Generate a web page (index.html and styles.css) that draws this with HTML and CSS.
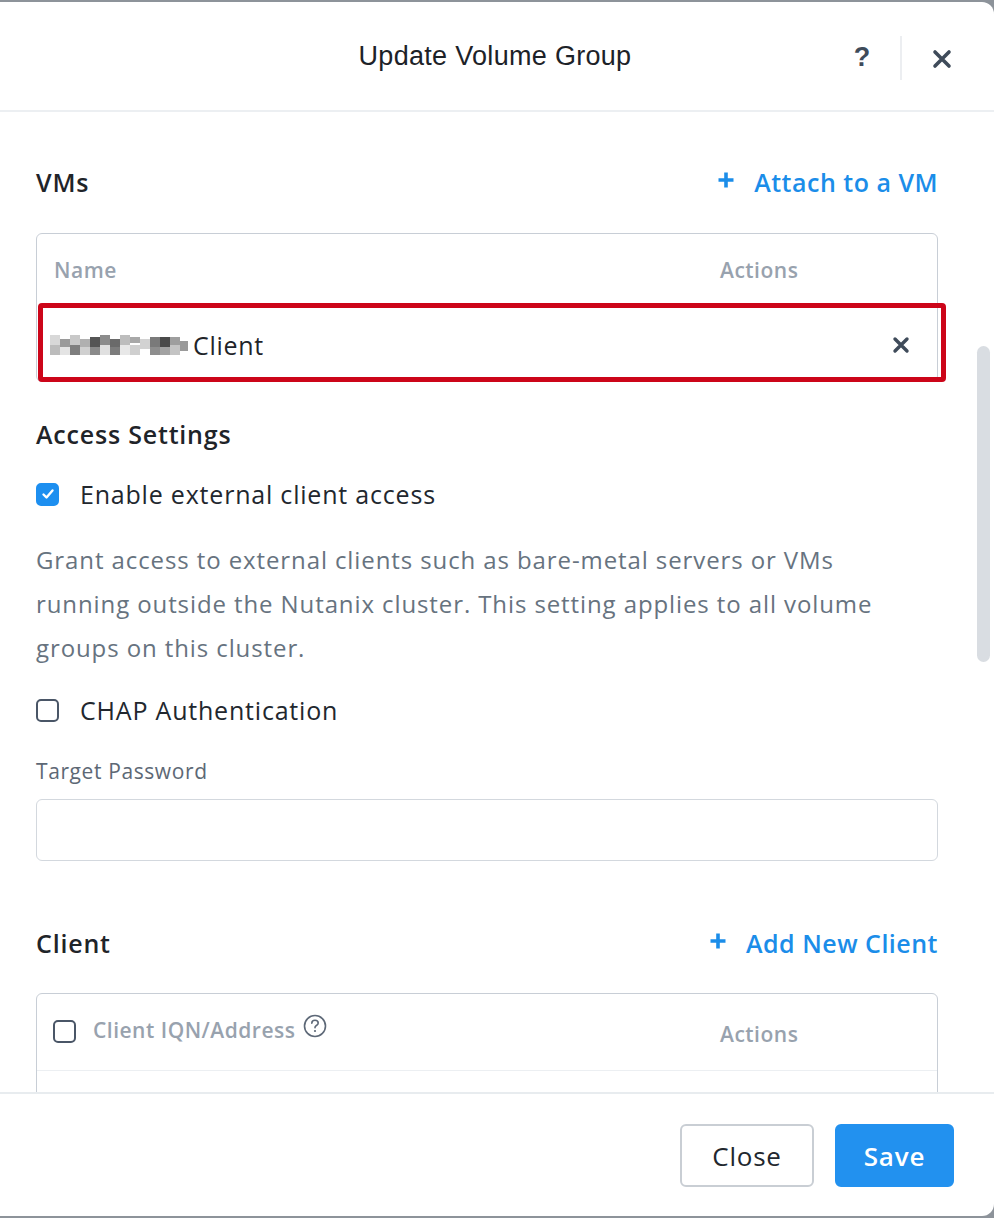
FILE: index.html
```html
<!DOCTYPE html>
<html lang="en">
<head>
    <meta charset="UTF-8">
    <meta name="viewport" content="width=device-width, initial-scale=1.0">
    <title>Update Volume Group</title>
    <link rel="stylesheet" href="styles.css">
</head>
<body>
    <div class="modal">
        <div class="modal-header">
            <h1>Update Volume Group</h1>
            <div class="header-tools">
                <span class="help">?</span>
                <span class="divider"></span>
                <svg class="close-x" width="20" height="20" viewBox="0 0 20 20">
                    <path d="M3 3 L17 17 M17 3 L3 17" stroke="#3f4b5a" stroke-width="3.6" stroke-linecap="round"/>
                </svg>
            </div>
        </div>

        <div class="modal-body">
            <div class="section-head">
                <h2>VMs</h2>
                <a class="add-link" href="#">
                    <svg class="plus" width="18" height="18" viewBox="0 0 18 18">
                        <path d="M9 1.5 V16.5 M1.5 9 H16.5" stroke="#1b8de9" stroke-width="3.6"/>
                    </svg>Attach to a VM
                </a>
            </div>
            <div class="table">
                <div class="table-head">
                    <span class="col-name">Name</span>
                    <span class="col-actions">Actions</span>
                </div>
                <div class="table-row highlighted">
                    <span class="col-name vm-name">
                        <svg class="mosaic" width="142" height="24" viewBox="0 0 142 24">
                            <rect x="0" y="2" width="10" height="10" fill="#d8d8d8"/>
                            <rect x="10" y="6" width="10" height="8" fill="#9a9a9a"/>
                            <rect x="20" y="2" width="10" height="10" fill="#c8c8c8"/>
                            <rect x="30" y="6" width="10" height="8" fill="#b0b0b0"/>
                            <rect x="40" y="4" width="10" height="10" fill="#555"/>
                            <rect x="50" y="2" width="10" height="10" fill="#8c8c8c"/>
                            <rect x="60" y="6" width="10" height="8" fill="#6a6a6a"/>
                            <rect x="70" y="2" width="10" height="10" fill="#bdbdbd"/>
                            <rect x="80" y="4" width="10" height="6" fill="#a8a8a8"/>
                            <rect x="90" y="6" width="10" height="10" fill="#d2d2d2"/>
                            <rect x="100" y="4" width="10" height="10" fill="#7a7a7a"/>
                            <rect x="110" y="4" width="10" height="10" fill="#4a4a4a"/>
                            <rect x="120" y="4" width="10" height="10" fill="#9e9e9e"/>
                            <rect x="0" y="12" width="10" height="10" fill="#bcbcbc"/>
                            <rect x="10" y="14" width="10" height="8" fill="#e4e4e4"/>
                            <rect x="20" y="12" width="10" height="10" fill="#7e7e7e"/>
                            <rect x="30" y="14" width="10" height="8" fill="#d0d0d0"/>
                            <rect x="40" y="14" width="10" height="8" fill="#8a8a8a"/>
                            <rect x="50" y="12" width="10" height="10" fill="#e0e0e0"/>
                            <rect x="60" y="14" width="10" height="8" fill="#7c7c7c"/>
                            <rect x="70" y="12" width="10" height="10" fill="#e8e8e8"/>
                            <rect x="80" y="12" width="10" height="10" fill="#cfcfcf"/>
                            <rect x="100" y="14" width="10" height="8" fill="#8e8e8e"/>
                            <rect x="110" y="14" width="10" height="8" fill="#a2a2a2"/>
                            <rect x="120" y="12" width="10" height="10" fill="#c4c4c4"/>
                            <rect x="130" y="8" width="8" height="10" fill="#9a9a9a"/>
                        </svg>Client
                    </span>
                    <span class="col-actions row-remove">
                        <svg width="18" height="18" viewBox="0 0 18 18">
                            <path d="M3 3 L15 15 M15 3 L3 15" stroke="#3f4b5a" stroke-width="3.4" stroke-linecap="round"/>
                        </svg>
                    </span>
                    <div class="annotation"></div>
                </div>
            </div>

            <h2 class="access-title">Access Settings</h2>
            <label class="check-row">
                <span class="checkbox checked">
                    <svg width="14" height="14" viewBox="0 0 14 14">
                        <path d="M2.5 7.5 L5.5 10.5 L11.5 3.5" stroke="#fff" stroke-width="2.4" fill="none" stroke-linecap="round" stroke-linejoin="round"/>
                    </svg>
                </span>
                Enable external client access
            </label>
            <p class="description">Grant access to external clients such as bare-metal servers or VMs running outside the Nutanix cluster. This setting applies to all volume groups on this cluster.</p>
            <label class="check-row chap">
                <span class="checkbox"></span>
                CHAP Authentication
            </label>

            <div class="field">
                <div class="field-label">Target Password</div>
                <div class="input"></div>
            </div>

            <div class="section-head client-head">
                <h2>Client</h2>
                <a class="add-link" href="#">
                    <svg class="plus" width="18" height="18" viewBox="0 0 18 18">
                        <path d="M9 1.5 V16.5 M1.5 9 H16.5" stroke="#1b8de9" stroke-width="3.6"/>
                    </svg>Add New Client
                </a>
            </div>
            <div class="table client-table">
                <div class="table-head">
                    <span class="col-name">
                        <span class="checkbox small"></span>
                        Client IQN/Address
                        <svg class="info" width="24" height="24" viewBox="0 0 24 24">
                            <circle cx="12" cy="12" r="10.5" stroke="#5d6877" stroke-width="1.6" fill="none"/>
                            <path d="M8.8 9.2 C8.8 7.3 10.2 6.3 12 6.3 C13.8 6.3 15.2 7.4 15.2 9 C15.2 10.6 13.9 11.1 12.9 11.8 C12.2 12.3 12 12.8 12 13.8" stroke="#5d6877" stroke-width="1.6" fill="none" stroke-linecap="round"/>
                            <circle cx="12" cy="17" r="1.1" fill="#5d6877"/>
                        </svg>
                    </span>
                    <span class="col-actions">Actions</span>
                </div>
                <div class="table-row empty"></div>
            </div>

            <div class="scroll-thumb"></div>
        </div>

        <div class="modal-footer">
            <button class="btn">Close</button>
            <button class="btn primary">Save</button>
        </div>
    </div>
</body>
</html>
```

FILE: styles.css
```css
html, body {
    margin: 0;
    height: 100%;
}
body {
    background-color: #8d939a;
    font-family: "Open Sans", "Liberation Sans", sans-serif;
    color: #22272e;
    overflow: hidden;
}
.modal {
    box-sizing: border-box;
    margin-top: 2px;
    height: 1214px;
    background: white;
    border-radius: 0 12px 12px 0;
    display: flex;
    flex-direction: column;
    overflow: hidden;
}

/* header */
.modal-header {
    height: 108px;
    flex-shrink: 0;
    border-bottom: 2px solid #eceff2;
    display: flex;
    align-items: center;
    justify-content: center;
    position: relative;
}
.modal-header h1 {
    margin: 0;
    font-family: "Liberation Sans", Arial, sans-serif;
    font-weight: normal;
    font-size: 27px;
    color: #1d2228;
    letter-spacing: 0.3px;
    margin-left: -4px;
}
.header-tools {
    position: absolute;
    right: 42px;
    top: 34px;
    display: flex;
    align-items: center;
    height: 44px;
}
.help {
    font-family: "Liberation Sans", Arial, sans-serif;
    font-weight: bold;
    font-size: 27px;
    color: #3f4b5a;
    width: 20px;
    text-align: center;
    margin-top: -2px;
}
.divider {
    width: 2px;
    height: 44px;
    background: #eceef1;
    margin: 0 30px 0 28px;
}
.close-x {
    margin-top: 2px;
}

/* body */
.modal-body {
    flex: 1;
    position: relative;
    padding: 48px 56px 0 36px;
    overflow: hidden;
}
.section-head {
    display: flex;
    justify-content: space-between;
    align-items: center;
    height: 44px;
}
h2 {
    margin: 0;
    font-size: 25px;
    font-weight: 600;
    letter-spacing: 0.8px;
    color: #1f2429;
}
.add-link {
    color: #1b8de9;
    font-size: 25px;
    font-weight: 600;
    letter-spacing: 0.5px;
    text-decoration: none;
    display: flex;
    align-items: center;
}
.plus {
    margin-right: 19px;
    margin-top: -4px;
}

.table {
    margin-top: 29px;
    border: 1px solid #c8ced6;
    border-radius: 6px;
}
.table-head {
    height: 71px;
    display: flex;
    align-items: center;
    color: #98a2ae;
    font-size: 21px;
    font-weight: 600;
    letter-spacing: 0.5px;
}
.col-name {
    flex: 1;
    padding-left: 17px;
    display: flex;
    align-items: center;
}
.col-actions {
    width: 217px;
}
.table-row {
    height: 76px;
    display: flex;
    align-items: center;
    position: relative;
    font-size: 25px;
    letter-spacing: 0.7px;
}
.vm-name {
    padding-left: 13px;
    color: #1f2429;
    margin-top: 3px;
}
.mosaic {
    margin-right: 1px;
}
.row-remove {
    display: flex;
    justify-content: flex-end;
    padding-right: 27px;
    box-sizing: border-box;
    margin-top: 4px;
}
.annotation {
    position: absolute;
    top: -2px;
    left: 1px;
    right: -9px;
    bottom: -1px;
    border: 5px solid #cc0519;
    border-radius: 4px;
}

.access-title {
    margin-top: 37px;
    line-height: 30px;
}
.check-row {
    display: flex;
    align-items: center;
    height: 30px;
    margin-top: 30px;
    font-size: 25px;
    letter-spacing: 0.8px;
    color: #22272e;
}
.checkbox {
    box-sizing: border-box;
    width: 23px;
    height: 23px;
    border: 2px solid #4a5667;
    border-radius: 5px;
    margin-right: 21px;
    display: flex;
    align-items: center;
    justify-content: center;
}
.checkbox.checked {
    background: #1d8ff0;
    border-color: #1d8ff0;
}
.description {
    margin: 29px 0 0;
    max-width: 870px;
    font-size: 24px;
    letter-spacing: 0.9px;
    line-height: 44px;
    color: #67737f;
}
.check-row.chap {
    margin-top: 25px;
}

.field {
    margin-top: 34px;
}
.field-label {
    font-size: 21px;
    letter-spacing: 0.6px;
    line-height: 24px;
    color: #5d6875;
}
.input {
    margin-top: 16px;
    height: 60px;
    border: 1px solid #d3d8de;
    border-radius: 6px;
}

.client-head {
    margin-top: 60px;
}
.client-table {
    margin-top: 28px;
}
.client-table .table-head {
    height: 76px;
    border-bottom: 1px solid #eceff2;
}
.client-table .col-name {
    padding-left: 16px;
    margin-top: -4px;
}
.checkbox.small {
    margin-right: 17px;
    margin-top: 2px;
}
.info {
    margin-left: 8px;
    margin-top: -8px;
}
.client-table .col-actions {
    margin-top: 4px;
}
.table-row.empty {
    height: 60px;
}

.scroll-thumb {
    position: absolute;
    right: 4px;
    top: 234px;
    width: 13px;
    height: 316px;
    border-radius: 7px;
    background: #d9dde2;
}

/* footer */
.modal-footer {
    height: 124px;
    flex-shrink: 0;
    border-top: 2px solid #e8ecef;
    display: flex;
    justify-content: flex-end;
    align-items: flex-start;
    padding: 30px 40px 0 0;
    box-sizing: border-box;
    gap: 21px;
}
.btn {
    height: 63px;
    border-radius: 6px;
    font-family: "Open Sans", "Liberation Sans", sans-serif;
    font-size: 26px;
    letter-spacing: 0.8px;
    border: 2px solid #c9ced4;
    background: white;
    color: #22272e;
    width: 134px;
}
.btn.primary {
    width: 119px;
    background: #2291ef;
    border-color: #2291ef;
    color: white;
    font-weight: 600;
}
```
